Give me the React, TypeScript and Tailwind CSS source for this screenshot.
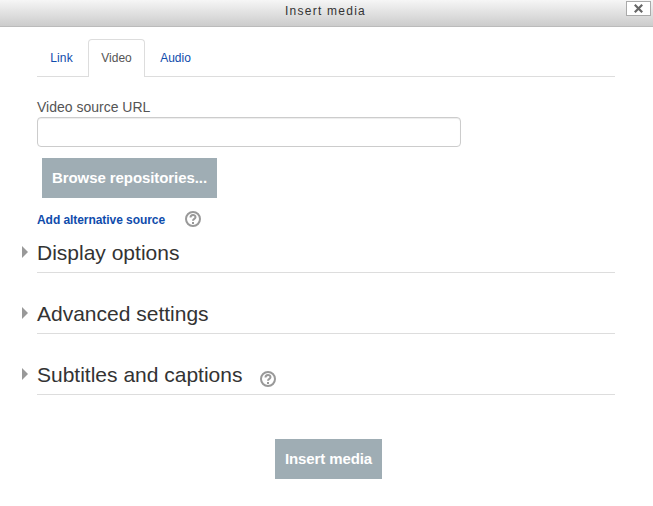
import React from 'react';

function Help() {
  return (
    <svg width="16" height="16" viewBox="0 0 16 16" fill="none" stroke="#999" strokeWidth="2">
      <circle cx="8" cy="8" r="7" />
      <path d="M5.5 6.500c0-3.300 5-3.300 5-.3C10.500 8 8 7.700 8 9.800M8 11v2" />
    </svg>
  );
}

function Section({ title, help }: { title: string; help?: boolean }) {
  return (
    <section className="relative mb-[21px] flex h-10 items-start border-b border-[#ddd]">
      <span className="absolute -left-[15px] top-[13px] border-y-[6px] border-l-[6px] border-y-transparent border-l-[#999]" />
      <h2 className="whitespace-nowrap text-[21px] leading-10 text-[#333]">{title}</h2>
      {help && <span className="ml-[18px] mt-4"><Help /></span>}
    </section>
  );
}

export default function App() {
  return (
    <div className="h-[506px] w-[653px] overflow-hidden bg-white font-['Liberation_Sans',Arial,sans-serif] text-[#555]">
      <header className="relative flex h-[27px] justify-center border-b border-[#bbb] bg-linear-to-b from-[#f6f6f6] to-[#ccc]">
        <h1 className="-ml-0.5 text-[12px] leading-[22px] tracking-[1.25px] text-[#333]">Insert media</h1>
        <button className="absolute right-[2px] top-px flex h-[15px] w-[25px] items-center justify-center border border-[#aaa] bg-white" aria-label="Close">
          <svg width="9" height="9" viewBox="0 0 9 9" stroke="#666" strokeWidth="2.2"><path d="M.8 .8l7.400 7.400M8.200 .8l-7.400 7.400" /></svg>
        </button>
      </header>
      <main className="pl-[37px] pr-[38px] pt-3">
        <nav className="flex h-[38px] border-b border-[#ddd] text-[12px] text-[#0f4cac]">
          <button className="w-[51px] pr-0.5 pt-px leading-[37px] tracking-[0.15px]">Link</button>
          <button className="h-[38px] w-[57px] rounded-t border border-b-0 border-[#ddd] bg-white leading-[37px] text-[#555]">Video</button>
          <button className="w-[61px] pt-px leading-[37px]">Audio</button>
        </nav>
        <label className="mt-5 block text-[14px] leading-5">Video source URL</label>
        <input className="block h-[30px] w-[424px] rounded border border-[#ccc] shadow-[inset_0_1px_1px_rgba(0,0,0,0.075)]" />
        <button className="ml-[5px] mt-[11px] block h-10 w-[175px] bg-[#9fadb4] text-[15px] font-bold tracking-[-0.08px] text-white">Browse repositories...</button>
        <div className="flex h-[35px] pt-[13px]">
          <a className="w-[148px] text-[12px] font-bold leading-[18px] tracking-[-0.06px] text-[#0f4cac]">Add alternative source</a>
          <Help />
        </div>
        <Section title="Display options" />
        <Section title="Advanced settings" />
        <Section title="Subtitles and captions" help />
        <button className="ml-[238px] mt-11 block h-10 w-[107px] bg-[#9fadb4] text-[15px] font-bold tracking-[-0.1px] text-white">Insert media</button>
      </main>
    </div>
  );
}
